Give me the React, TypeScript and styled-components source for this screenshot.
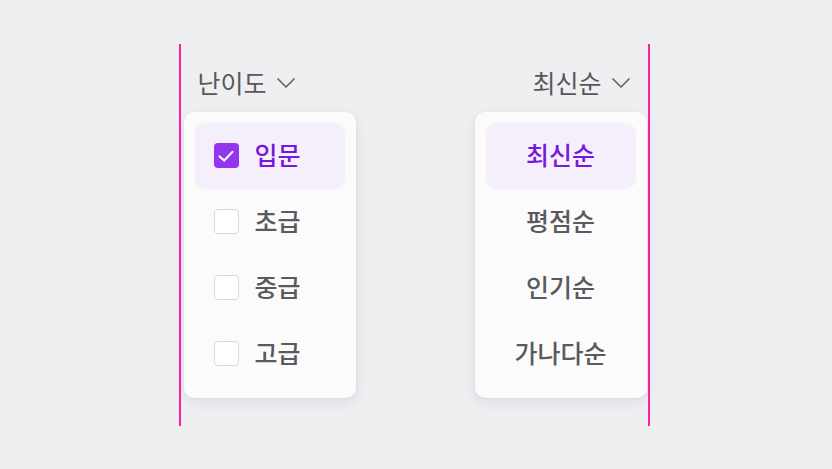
import { useState } from 'react';
import styled, { createGlobalStyle } from 'styled-components';

const LEVELS = ['입문', '초급', '중급', '고급'];
const SORTS = ['최신순', '평점순', '인기순', '가나다순'];

const GlobalStyle = createGlobalStyle`
	html, body {
		margin: 0;
		padding: 0;
		background: #efeef1;
	}
	body {
		font-family: 'Noto Sans CJK KR', 'Noto Sans', sans-serif;
	}
`;

const Chevron = () => (
	<ChevronSvg viewBox='0 0 20 12' width='20' height='12'>
		<polyline points='2,2 10,10 18,2' />
	</ChevronSvg>
);

const CheckMark = () => (
	<svg viewBox='0 0 24 24' width='22' height='22'>
		<polyline
			points='5,12.5 10,17 19,7.5'
			fill='none'
			stroke='#fff'
			strokeWidth='2.3'
			strokeLinecap='round'
			strokeLinejoin='round'
		/>
	</svg>
);

const App = () => {
	const [levels, setLevels] = useState<string[]>(['입문']);
	const [sort, setSort] = useState('최신순');

	const toggleLevel = (level: string) =>
		setLevels(prev =>
			prev.includes(level) ? prev.filter(l => l !== level) : [...prev, level]
		);

	return (
		<>
			<GlobalStyle />
			<Stage>
				<Frame>
					{/* Level filter */}
					<Column>
						<Trigger $align='left'>
							난이도
							<Chevron />
						</Trigger>
						<Menu>
							{LEVELS.map(level => {
								const checked = levels.includes(level);
								return (
									<Option
										key={level}
										$active={checked}
										$center={false}
										onClick={() => toggleLevel(level)}
									>
										<Box $checked={checked}>{checked && <CheckMark />}</Box>
										{level}
									</Option>
								);
							})}
						</Menu>
					</Column>

					{/* Sort order */}
					<Column>
						<Trigger $align='right'>
							{sort}
							<Chevron />
						</Trigger>
						<Menu>
							{SORTS.map(item => (
								<Option
									key={item}
									$active={item === sort}
									$center
									onClick={() => setSort(item)}
								>
									{item}
								</Option>
							))}
						</Menu>
					</Column>
				</Frame>
			</Stage>
		</>
	);
};

const Stage = styled.div`
	height: 469px;
	padding-right: 4px;
	display: flex;
	align-items: center;
	justify-content: center;
`;

const Frame = styled.div`
	box-sizing: border-box;
	width: 471px;
	height: 382px;
	border-left: 2px solid #ff1fa5;
	border-right: 2px solid #ff1fa5;
	padding: 0 1px 0 3px;
	display: flex;
	justify-content: space-between;
	align-items: flex-start;
`;

const Column = styled.div`
	width: 172px;
	display: flex;
	flex-direction: column;
`;

const Trigger = styled.div<{ $align: 'left' | 'right' }>`
	display: flex;
	align-items: center;
	justify-content: ${props => (props.$align === 'left' ? 'flex-start' : 'flex-end')};
	gap: 9px;
	height: 30px;
	margin-top: 23px;
	margin-bottom: 15px;
	padding: 0 16px 0 14px;
	font-size: 25px;
	font-weight: 400;
	color: #58575c;
	cursor: pointer;
`;

const ChevronSvg = styled.svg`
	margin-top: 2px;
	fill: none;
	stroke: #66656a;
	stroke-width: 1.7;
	stroke-linecap: round;
	stroke-linejoin: round;
`;

const Menu = styled.div`
	box-sizing: border-box;
	height: 286px;
	padding: 11px;
	background: #fbfbfc;
	border-radius: 10px;
	box-shadow: 0 4px 14px rgba(40, 30, 60, 0.08), 0 1px 3px rgba(40, 30, 60, 0.05);
	display: flex;
	flex-direction: column;
`;

const Option = styled.div<{ $active: boolean; $center: boolean }>`
	box-sizing: border-box;
	height: 66px;
	flex-shrink: 0;
	display: flex;
	align-items: center;
	justify-content: ${props => (props.$center ? 'center' : 'flex-start')};
	gap: 16px;
	padding: 0 ${props => (props.$center ? '0' : '19px')} 3px;
	border-radius: 10px;
	font-size: 25px;
	font-weight: 500;
	color: ${props => (props.$active ? '#7a17de' : '#5a595e')};
	background: ${props => (props.$active ? '#f5effc' : 'transparent')};
	cursor: pointer;
`;

const Box = styled.span<{ $checked: boolean }>`
	box-sizing: border-box;
	width: 25px;
	height: 25px;
	margin-top: 3px;
	border-radius: 4px;
	display: flex;
	align-items: center;
	justify-content: center;
	background: ${props => (props.$checked ? '#9436ee' : '#ffffff')};
	border: ${props => (props.$checked ? 'none' : '1.5px solid #d9d8dd')};
`;

export default App;
